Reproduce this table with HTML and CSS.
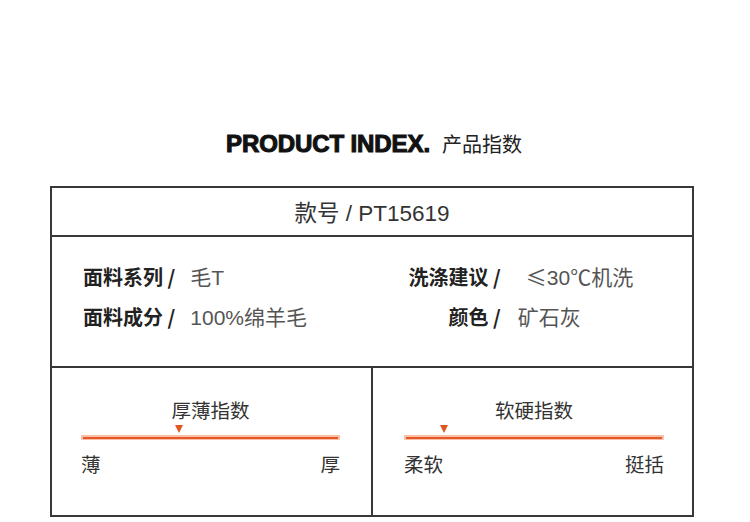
FILE: index.html
```html
<!DOCTYPE html>
<html lang="zh">
<head>
<meta charset="utf-8">
<link rel="stylesheet" href="styles.css">
</head>
<body>
<div class="page">
  <h1 class="title"><span class="title-en">PRODUCT INDEX.</span><span class="title-cn">产品指数</span></h1>
  <div class="sheet">
    <div class="row code">款号 / PT15619</div>
    <div class="row specs">
      <div class="spec-group left">
        <div class="label">面料系列 /</div><div class="value">毛T</div>
        <div class="label">面料成分 /</div><div class="value">100%绵羊毛</div>
      </div>
      <div class="spec-group right">
        <div class="label">洗涤建议 /</div><div class="value"><span class="cjk">≤</span>30<span class="cjk">℃</span>机洗</div>
        <div class="label">颜色 /</div><div class="value shift">矿石灰</div>
      </div>
    </div>
    <div class="row scales">
      <div class="scale">
        <div class="scale-title">厚薄指数</div>
        <div class="bar"><span class="marker" style="left: 38%"></span></div>
        <div class="ends"><span>薄</span><span>厚</span></div>
      </div>
      <div class="scale">
        <div class="scale-title">软硬指数</div>
        <div class="bar"><span class="marker" style="left: 15.5%"></span></div>
        <div class="ends"><span>柔软</span><span>挺括</span></div>
      </div>
    </div>
  </div>
</div>
</body>
</html>
```

FILE: styles.css
```css
* { box-sizing: border-box; }
html, body { margin: 0; padding: 0; background: #fff; }
body {
  font-family: "Liberation Sans", "Noto Sans CJK SC", sans-serif;
  color: #333;
  width: 750px;
  height: 522px;
  overflow: hidden;
}
.page { padding-top: 129px; }
.title {
  margin: 0;
  height: 57px;
  display: flex;
  justify-content: center;
  align-items: flex-start;
  gap: 12px;
  padding-right: 2px;
  font-weight: normal;
}
.title-en {
  font-family: "Liberation Sans", sans-serif;
  font-weight: 900;
  font-size: 24px;
  line-height: 30px;
  color: #111;
  letter-spacing: -0.1px;
  -webkit-text-stroke: 1.1px #111;
}
.title-cn {
  font-family: "Noto Sans CJK SC", sans-serif;
  font-size: 20px;
  line-height: 30px;
  color: #222;
}
.sheet {
  margin-left: 50px;
  width: 644px;
  border: 2px solid #383838;
}
.row { border-bottom: 2px solid #383838; }
.row:last-child { border-bottom: none; }
.code {
  height: 49px;
  display: flex;
  align-items: center;
  justify-content: center;
  font-size: 22.5px;
  color: #333;
  padding-bottom: 2px;
}
.specs {
  height: 131px;
  display: grid;
  grid-template-columns: 1fr 1fr;
  padding: 19px 0 0 31px;
}
.spec-group {
  display: grid;
  grid-template-columns: auto 1fr;
  grid-auto-rows: 40px;
  column-gap: 15px;
  align-items: center;
  font-size: 20px;
}
.spec-group.right { padding-left: 21px; column-gap: 25px; }
.label {
  font-family: "Noto Sans CJK SC", sans-serif;
  font-weight: bold;
  color: #222;
  text-align: right;
}
.value { color: #555; font-weight: normal; font-size: 21px; }
.value .cjk { font-family: "Noto Sans CJK SC", sans-serif; }
.value.shift { margin-left: -8px; }
.scales {
  height: 147px;
  display: grid;
  grid-template-columns: 321px 1fr;
}
.scale {
  padding: 27px 28px 0 29px;
  font-family: "Noto Sans CJK SC", sans-serif;
  font-size: 19.5px;
  color: #333;
}
.scale:first-child { border-right: 2px solid #383838; padding-right: 31px; }
.scale:last-child { padding-left: 31px; }
.scale-title {
  text-align: center;
  line-height: 30px;
  height: 30px;
}
.bar {
  position: relative;
  margin-top: 10px;
  height: 5px;
  background: #fbbfa5;
  border-radius: 1px;
}
.bar::after {
  content: "";
  position: absolute;
  left: 2px;
  right: 2px;
  top: 2px;
  height: 1.5px;
  background: #e5582a;
}
.marker {
  position: absolute;
  top: -10px;
  width: 0;
  height: 0;
  margin-left: -4px;
  border-left: 4.5px solid transparent;
  border-right: 4.5px solid transparent;
  border-top: 8px solid #e0561d;
}
.ends {
  display: flex;
  justify-content: space-between;
  margin-top: 9px;
  line-height: 30px;
  color: #333;
}
```
